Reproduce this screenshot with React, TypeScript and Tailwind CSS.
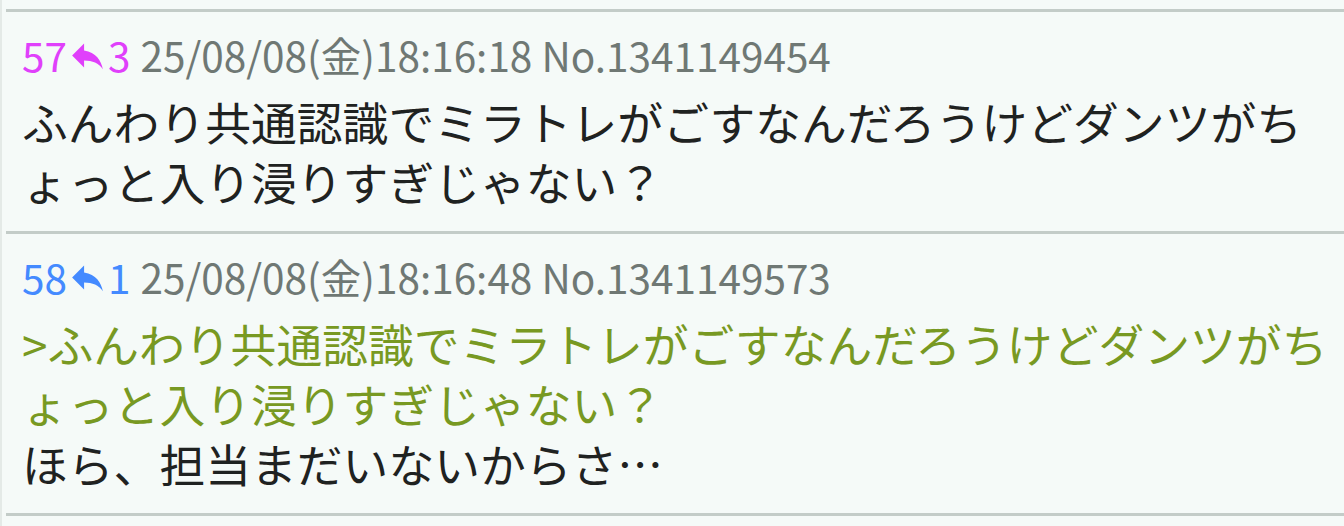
import React from "react";

type Post = {
  no: number;
  replies: number;
  color: string;
  date: string;
  id: string;
  quote?: string;
  body: string;
};

const POSTS: Post[] = [
  {
    no: 57,
    replies: 3,
    color: "text-[#e040fb]",
    date: "25/08/08(金)18:16:18",
    id: "No.1341149454",
    body: "ふんわり共通認識でミラトレがごすなんだろうけどダンツがちょっと入り浸りすぎじゃない？",
  },
  {
    no: 58,
    replies: 1,
    color: "text-[#448aff]",
    date: "25/08/08(金)18:16:48",
    id: "No.1341149573",
    quote: ">ふんわり共通認識でミラトレがごすなんだろうけどダンツがちょっと入り浸りすぎじゃない？",
    body: "ほら、担当まだいないからさ…",
  },
];

function ReplyIcon() {
  return (
    <svg viewBox="0 0 24 24" className="w-[41px] h-[41px] fill-current mx-0" aria-hidden>
      <path d="M10 9V5l-7 7 7 7v-4.1c5 0 8.5 1.6 11 5.1-1-5-4-10-11-11z" />
    </svg>
  );
}

function PostRow({ post }: { post: Post }) {
  return (
    <div className="border-t-[3px] border-[#c3ccc8] pl-4 pr-4 pt-[18px] pb-[20px]">
      <div className="flex items-center h-[50px] text-[40.5px] leading-[50px]">
        <span className={`${post.color} flex items-center`}>
          {post.no}
          <ReplyIcon />
          {post.replies}
        </span>
        <span className="ml-2.5 text-[#6f7874]">
          {post.date} {post.id}
        </span>
      </div>
      <div className="mt-[11px] text-[45.8px] leading-[60px] text-[#1f2221] [line-break:anywhere]">
        {post.quote && <div className="text-[#789922]">{post.quote}</div>}
        <div>{post.body}</div>
      </div>
    </div>
  );
}

export default function App() {
  return (
    <div
      className="w-[1344px] h-[526px] overflow-hidden bg-[#f5faf8] border-l-2 border-[#e4eae7] pt-[9px]"
      style={{ fontFamily: '"Noto Sans CJK JP", "Noto Sans", sans-serif' }}
    >
      <div className="ml-1">
        {POSTS.map((p) => (
          <PostRow key={p.no} post={p} />
        ))}
        <div className="border-t-[3px] border-[#c3ccc8]" />
      </div>
    </div>
  );
}
